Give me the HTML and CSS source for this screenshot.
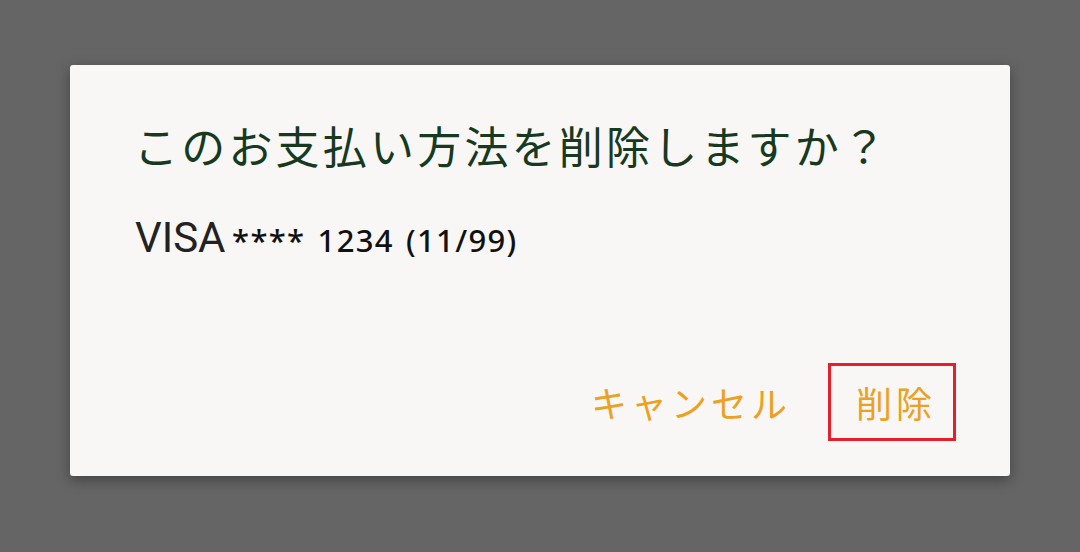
FILE: index.html
```html
<!DOCTYPE html>
<html lang="ja">
<head>
<meta charset="utf-8">
<link rel="stylesheet" href="styles.css">
</head>
<body>
<div class="screen">
  <div class="dialog">
    <h1 class="title">このお支払い方法を削除しますか？</h1>
    <p class="body"><span class="brand">VISA</span> <span class="num">**** 1234 (11/99)</span></p>
    <div class="actions">
      <button class="btn">キャンセル</button>
      <button class="btn btn-delete">削除</button>
    </div>
  </div>
</div>
</body>
</html>
```
FILE: styles.css
```css
html, body {
  margin: 0;
  padding: 0;
}
body {
  width: 1080px;
  height: 552px;
  background: #656565;
  overflow: hidden;
  font-family: "Noto Sans CJK JP", "Noto Sans", sans-serif;
}
.screen {
  padding: 65px 70px 0 70px;
}
.dialog {
  width: 940px;
  height: 411px;
  box-sizing: border-box;
  background: #f8f7f5;
  border-radius: 3px;
  box-shadow: 0 4px 14px rgba(0,0,0,0.35);
  padding: 58px 0 0 64px;
  display: flex;
  flex-direction: column;
}
.title {
  margin: 0;
  font-weight: 400;
  font-size: 44px;
  letter-spacing: 3.2px;
  line-height: 1;
  color: #17391f;
}
.body {
  margin: 50px 0 0 1px;
  line-height: 1;
  color: #1f1f1f;
  white-space: nowrap;
}
.brand {
  font-family: Roboto, "Noto Sans", sans-serif;
  font-size: 42px;
  color: #222;
}
.num {
  font-family: "Noto Sans", sans-serif;
  font-size: 31px;
  font-weight: 500;
  letter-spacing: 1.3px;
  word-spacing: 3px;
  padding-left: 3px;
  color: #111;
}
.actions {
  margin-top: auto;
  margin-bottom: 35px;
  margin-right: 54px;
  display: flex;
  justify-content: flex-end;
  align-items: center;
  gap: 34px;
}
.btn {
  background: none;
  border: 3px solid transparent;
  font-family: "Noto Sans CJK JP", sans-serif;
  font-size: 36px;
  letter-spacing: 4px;
  color: #eba121;
  padding: 10px 17px 10px 25px;
  line-height: 1.45;
}
.btn:first-child {
  padding-right: 0;
}
.btn-delete {
  border-color: #e6202a;
}
```
